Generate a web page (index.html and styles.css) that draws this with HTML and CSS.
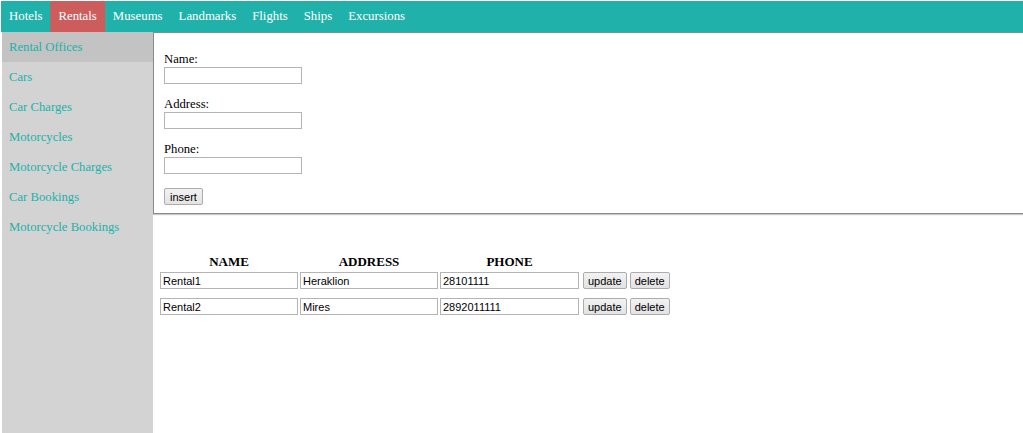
FILE: index.html
```html
<!DOCTYPE html>
<html lang="en">

<head>
    <meta charset="UTF-8">
    <title>Rentals - Rental Offices</title>
    <link rel="stylesheet" href="styles.css">
</head>

<body>
    <div class="topnav">
        <a href="#">Hotels</a>
        <a href="#" class="active">Rentals</a>
        <a href="#">Museums</a>
        <a href="#">Landmarks</a>
        <a href="#">Flights</a>
        <a href="#">Ships</a>
        <a href="#">Excursions</a>
    </div>

    <div class="layout">
        <div class="sidenav">
            <a href="#" class="active">Rental Offices</a>
            <a href="#">Cars</a>
            <a href="#">Car Charges</a>
            <a href="#">Motorcycles</a>
            <a href="#">Motorcycle Charges</a>
            <a href="#">Car Bookings</a>
            <a href="#">Motorcycle Bookings</a>
        </div>

        <div class="content">
            <form class="insert-form">
                <label for="name">Name:</label>
                <input type="text" id="name" name="name">

                <label for="address">Address:</label>
                <input type="text" id="address" name="address">

                <label for="phone">Phone:</label>
                <input type="text" id="phone" name="phone">

                <button type="button" class="btn">insert</button>
            </form>

            <div class="records">
                <div class="records-head">
                    <span>NAME</span>
                    <span>ADDRESS</span>
                    <span>PHONE</span>
                </div>
                <div class="record">
                    <input type="text" value="Rental1">
                    <input type="text" value="Heraklion">
                    <input type="text" value="28101111">
                    <div class="actions">
                        <button type="button" class="btn">update</button>
                        <button type="button" class="btn">delete</button>
                    </div>
                </div>
                <div class="record">
                    <input type="text" value="Rental2">
                    <input type="text" value="Mires">
                    <input type="text" value="2892011111">
                    <div class="actions">
                        <button type="button" class="btn">update</button>
                        <button type="button" class="btn">delete</button>
                    </div>
                </div>
            </div>
        </div>
    </div>
</body>

</html>
```

FILE: styles.css
```css
* {
    margin: 0;
    padding: 0;
    box-sizing: border-box;
}

body {
    font-family: 'Liberation Serif', 'Times New Roman', serif;
    font-size: 12.7px;
    background: white;
    padding-top: 1px;
    height: 433px;
    overflow: hidden;
}

.topnav {
    display: flex;
    height: 31px;
    margin-left: 1px;
    background-color: #20b2aa;
}

.topnav a {
    display: block;
    padding: 0 8px;
    line-height: 31px;
    font-size: 12.8px;
    color: white;
    text-decoration: none;
}

.topnav a.active {
    background-color: #cd5c5c;
}

.layout {
    display: flex;
    height: 401px;
}

.sidenav {
    width: 151px;
    margin-left: 2px;
    background-color: #d3d3d3;
}

.sidenav a {
    display: block;
    height: 30px;
    line-height: 30px;
    padding-left: 7px;
    color: #20b2aa;
    text-decoration: none;
}

.sidenav a.active {
    background-color: #c3c3c3;
}

.content {
    flex: 1;
}

.insert-form {
    display: flex;
    flex-direction: column;
    align-items: flex-start;
    height: 182px;
    padding: 19px 10px 0 10px;
    border: 1px solid #8a8a8a;
    border-right: none;
    box-shadow: 0 1px 1px #c8c8c8;
}

.insert-form label {
    line-height: 15px;
}

.insert-form input {
    margin-bottom: 13px;
}

input[type="text"] {
    width: 138px;
    height: 17px;
    padding: 0 2px;
    border: 1px solid #b4b4b4;
    font-family: 'Liberation Sans', Arial, sans-serif;
    font-size: 11px;
    color: #000;
    background: white;
}

.btn {
    height: 17px;
    padding: 0 4px;
    border: 1px solid #acacac;
    border-radius: 2px;
    background: linear-gradient(#f2f2f2, #e3e3e3);
    font-family: 'Liberation Sans', Arial, sans-serif;
    font-size: 11px;
    color: #000;
    cursor: pointer;
}

.insert-form .btn {
    margin-top: 1px;
    padding: 0 5px;
}

.records {
    margin: 40px 0 0 7px;
}

.records-head {
    display: flex;
    gap: 2px;
    height: 16px;
    margin-bottom: 2px;
    font-size: 13px;
    font-weight: bold;
}

.records-head span {
    width: 138px;
    text-align: center;
    line-height: 16px;
}

.records-head span:last-child {
    width: 139px;
}

.record {
    display: flex;
    gap: 2px;
    margin-bottom: 9px;
}

.record input:nth-child(3) {
    width: 139px;
}

.actions {
    display: flex;
    gap: 3px;
    margin-left: 2px;
}
```
